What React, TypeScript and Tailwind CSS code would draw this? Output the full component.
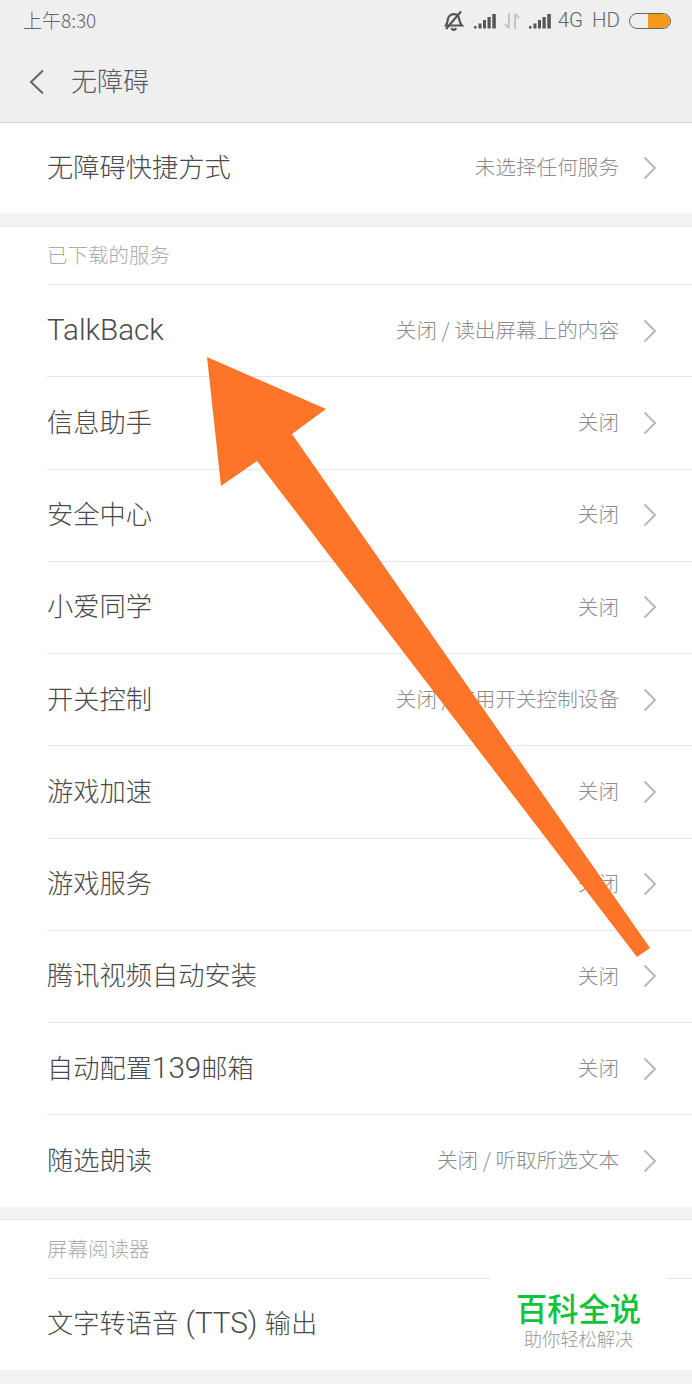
import type { ReactNode } from 'react';

const font = { fontFamily: '"Noto Sans CJK SC", Roboto, sans-serif' };
const latin = { fontFamily: 'Roboto, sans-serif' };

function Chevron() {
  return (
    <svg width="14" height="24" viewBox="0 0 14 24" fill="none" className="ml-[24px] shrink-0">
      <path d="M1.5 1.5 L12 12 L1.5 22.5" stroke="#b8b8b8" strokeWidth="2" />
    </svg>
  );
}

function L({ children }: { children: ReactNode }) {
  return (
    <span className="text-[29.6px] font-light" style={latin}>
      {children}
    </span>
  );
}

function Title({ children, mixed }: { children: ReactNode; mixed?: boolean }) {
  return (
    <span className={`text-[26.25px] text-[#4a4a4a] font-light leading-none whitespace-nowrap ${mixed ? 'pb-0' : 'pb-[4px]'}`}>
      {children}
    </span>
  );
}

function Value({ children }: { children: ReactNode }) {
  return <span className="ml-auto text-[20.6px] text-[#8c8c8c] font-light leading-none whitespace-nowrap pb-[3px]">{children}</span>;
}

function Row({ title, value, mixed }: { title: ReactNode; value: string; mixed?: boolean }) {
  return (
    <div className="h-[92.25px] flex items-center pr-[35px] ml-[47px] border-t border-[#e6e6e6]">
      <Title mixed={mixed}>{title}</Title>
      <Value>{value}</Value>
      <Chevron />
    </div>
  );
}

const rows: [ReactNode, string, boolean?][] = [
  [<L>TalkBack</L>, '关闭 / 读出屏幕上的内容', true],
  ['信息助手', '关闭'],
  ['安全中心', '关闭'],
  ['小爱同学', '关闭'],
  ['开关控制', '关闭 / 使用开关控制设备'],
  ['游戏加速', '关闭'],
  ['游戏服务', '关闭'],
  ['腾讯视频自动安装', '关闭'],
  [<>自动配置<L>139</L>邮箱</>, '关闭', true],
  ['随选朗读', '关闭 / 听取所选文本'],
];

function Signal() {
  return (
    <svg width="22" height="16" viewBox="0 0 22 16" fill="#555">
      <rect x="0" y="13" width="2.5" height="2.5" />
      <rect x="4.5" y="10.5" width="3" height="5" />
      <rect x="9" y="7" width="3" height="8.5" />
      <rect x="13.5" y="4" width="3.2" height="11.5" />
      <rect x="18.3" y="1" width="3.5" height="14.5" />
    </svg>
  );
}

export default function App() {
  return (
    <div className="relative w-[692px] h-[1384px] overflow-hidden bg-[#f3f3f3]" style={font}>
      <header className="h-[123px] bg-[#efefef] border-b border-[#d4d4d4] flex flex-col">
        <div className="h-[41px] pl-[23px] pr-[21px] flex items-center text-[#666]">
          <span className="text-[19px] font-light leading-none pb-[3px]">上午8:30</span>
          <div className="ml-auto flex items-center">
            <svg width="20" height="22" viewBox="0 0 20 22" fill="none" stroke="#555" strokeWidth="2.2">
              <path d="M2 15.5 C4 13 3 9 5 6.5 C7 3.5 12 3.5 14 6 C16 9 15 13 18 15.5 Z" />
              <path d="M7.5 18 C8.5 20.5 11 20.5 12 18" />
              <path d="M2 19 L17 1.5" />
            </svg>
            <div className="ml-[10px]"><Signal /></div>
            <svg width="16" height="18" viewBox="0 0 16 18" fill="none" stroke="#c4c4c4" strokeWidth="2.2" className="ml-[8px]">
              <path d="M5 1 V16 M1 12 L5 16" />
              <path d="M11 17 V2 M15 6 L11 2" />
            </svg>
            <div className="ml-[9px]"><Signal /></div>
            <span className="ml-[7px] text-[20.5px] font-light leading-none pb-[1px]" style={latin}>4G</span>
            <span className="ml-[9px] text-[20.5px] font-light leading-none pb-[1px]" style={latin}>HD</span>
            <div className="ml-[9px] w-[42px] h-[16px] rounded-full border-[1.5px] border-[#666] flex justify-end overflow-hidden">
              <div className="w-[22px] h-full bg-[#f59a1c] rounded-r-full" />
            </div>
          </div>
        </div>
        <div className="flex-1 flex items-center pl-[29px]">
          <svg width="16" height="26" viewBox="0 0 16 26" fill="none" className="mt-[1px]">
            <path d="M14 1.5 L2 13 L14 24.5" stroke="#666" strokeWidth="2" />
          </svg>
          <span className="ml-[26px] text-[26px] text-[#5a5a5a] font-light leading-none pb-[3px]">无障碍</span>
        </div>
      </header>

      <section className="h-[90px] bg-white">
        <div className="h-full flex items-center pr-[35px] pl-[47px]">
          <Title>无障碍快捷方式</Title>
          <Value>未选择任何服务</Value>
          <Chevron />
        </div>
      </section>

      <section className="mt-[13px] bg-white border-t border-[#ececec]">
        <div className="h-[57px] flex items-center pl-[47px] text-[20.5px] text-[#ababab] font-light leading-none pb-[2px]">已下载的服务</div>
        {rows.map(([t, v, m], i) => (
          <Row key={i} title={t} value={v} mixed={m} />
        ))}
      </section>

      <section className="mt-[12px] bg-white border-t border-[#ececec]">
        <div className="h-[58px] flex items-center pl-[47px] text-[20.5px] text-[#ababab] font-light leading-none pb-[1px]">屏幕阅读器</div>
        <div className="h-[92px] flex items-center ml-[47px] border-t border-[#e6e6e6]">
          <Title mixed>文字转语音<L> (TTS) </L>输出</Title>
        </div>
      </section>

      <svg width="692" height="1384" viewBox="0 0 692 1384" className="absolute inset-0 pointer-events-none">
        <polygon points="207,357 326,409 292,434 650,948 637,957 257,461 221,486" fill="#fe7428" />
      </svg>

      <div className="absolute left-[491px] top-[1275px] w-[175px] h-[85px] bg-white flex flex-col items-center pt-[17px]">
        <span className="text-[31.3px] font-medium text-[#12c23a] leading-none">百科全说</span>
        <span className="mt-[6px] text-[18.3px] text-[#999] font-light leading-none">助你轻松解决</span>
      </div>
    </div>
  );
}
